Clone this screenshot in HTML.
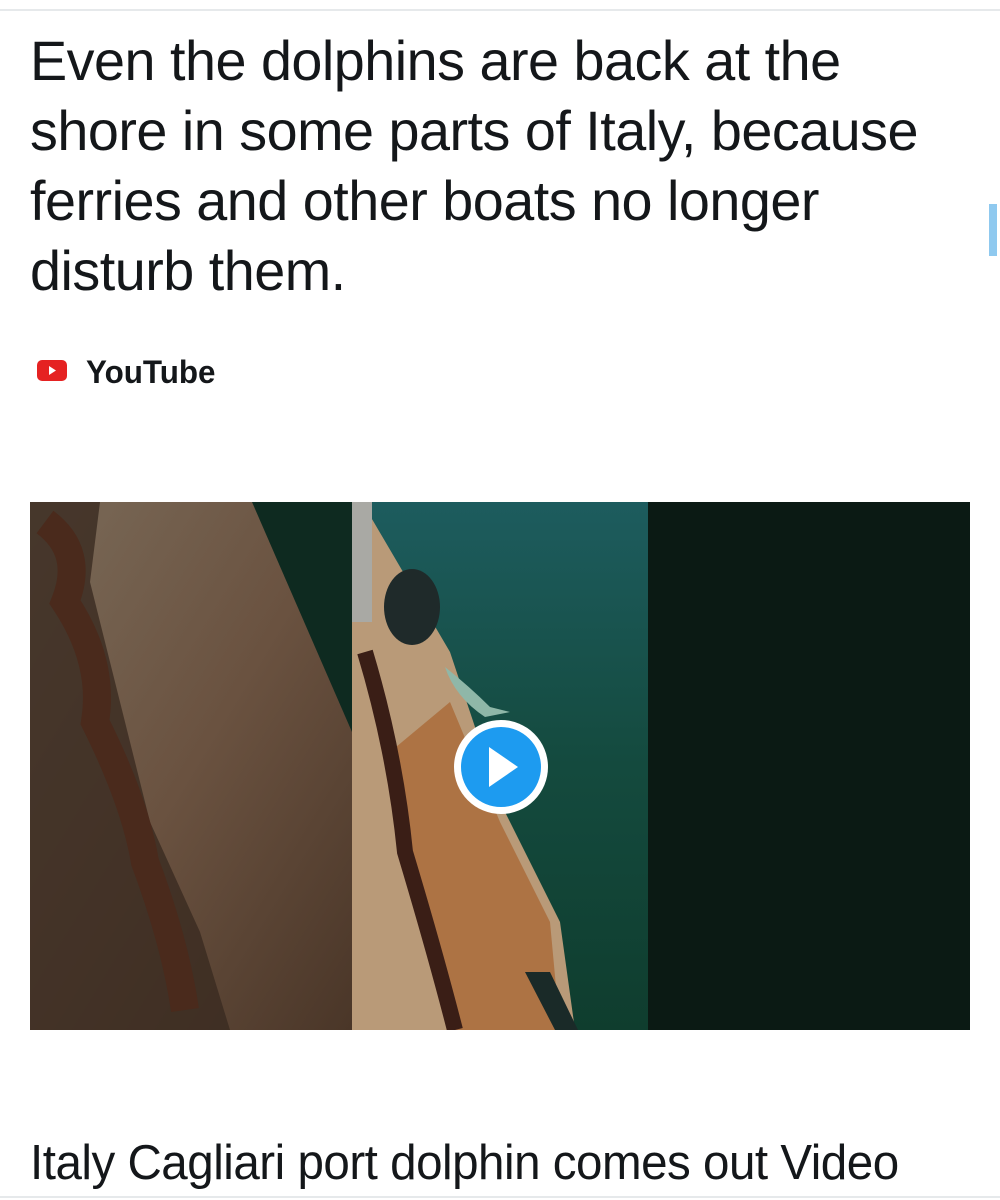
<!DOCTYPE html>
<html><head><meta charset="utf-8"><style>
html,body{margin:0;padding:0;background:#fff;width:1000px;height:1200px;overflow:hidden;position:relative;font-family:"Liberation Sans",sans-serif;color:#14171a}
.top{position:absolute;left:0;top:9px;width:1000px;height:2px;background:#e6e9eb}
.h{position:absolute;left:30px;top:26px;font-size:56px;line-height:70px;letter-spacing:-0.5px;width:1100px;white-space:nowrap}
.h div{transform:scaleX(0.995);transform-origin:left}
.bar{position:absolute;left:989px;top:204px;width:8px;height:52px;background:#8fc9ef}
.yt{position:absolute;left:86px;top:354px;font-size:32px;font-weight:bold;letter-spacing:0px;transform:scaleX(0.98);transform-origin:left}
.cap{position:absolute;left:30px;top:1135px;font-size:49px;letter-spacing:-0.5px;white-space:nowrap;transform:scaleX(0.97);transform-origin:left}
.bot{position:absolute;left:0;top:1196px;width:1000px;height:2px;background:#e6e9eb}
svg{position:absolute}
</style></head><body>
<div class="top"></div>
<div class="h"><div>Even the dolphins are back at the</div><div>shore in some parts of Italy, because</div><div>ferries and other boats no longer</div><div>disturb them.</div></div>
<div class="bar"></div>
<svg style="left:37px;top:360px" width="30" height="22"><rect x="0" y="0" width="30" height="21" rx="5" fill="#e52222"/><path d="M12 6 L19 10.5 L12 15Z" fill="#fff"/></svg>
<div class="yt">YouTube</div>
<svg style="left:30px;top:502px" width="940" height="528" viewBox="0 0 940 528">
<defs>
<linearGradient id="l" x1="0" y1="0" x2="1" y2="1"><stop offset="0" stop-color="#7a6a58"/><stop offset="0.5" stop-color="#6a5240"/><stop offset="1" stop-color="#4a3628"/></linearGradient>
<linearGradient id="w" x1="0" y1="0" x2="0" y2="1"><stop offset="0" stop-color="#1d5c5e"/><stop offset="0.5" stop-color="#144a3e"/><stop offset="1" stop-color="#0f3d2e"/></linearGradient>
</defs>
<rect width="940" height="528" fill="#0b1a14"/>
<rect width="322" height="528" fill="url(#l)"/>
<polygon points="222,0 322,0 322,230" fill="#0e2a20"/>
<path d="M0 0 L70 0 L60 80 L90 200 L120 320 L170 430 L200 528 L0 528Z" fill="#3a2a20" opacity="0.8"/>
<path d="M15 20 q40 30 20 80 q40 60 30 120 q40 80 50 140 q30 80 40 148" stroke="#4a2a1c" stroke-width="28" fill="none"/>
<rect x="322" width="296" height="528" fill="url(#w)"/>
<polygon points="322,0 332,0 420,150 470,300 530,420 545,528 322,528" fill="#b99a78"/>
<polygon points="360,250 420,200 470,320 520,420 530,528 420,528 390,400" fill="#a8622e" opacity="0.7"/>
<path d="M335 150 q30 100 40 200 q30 100 50 178" stroke="#3a1e16" stroke-width="16" fill="none"/>
<ellipse cx="382" cy="105" rx="28" ry="38" fill="#1f2a2a"/>
<rect x="322" y="0" width="20" height="120" fill="#a9a9a4"/>
<path d="M415 165 q25 20 45 40 l20 5 l-25 5 q-30 -20 -40 -50Z" fill="#8fb7a8"/>
<polygon points="495,470 520,470 548,528 525,528" fill="#1a2a28"/>
<circle cx="471" cy="265" r="47" fill="#fff"/>
<circle cx="471" cy="265" r="40" fill="#1d9bf0"/>
<path d="M459 245 L488 265 L459 285Z" fill="#fff"/>
</svg>
<div class="cap">Italy Cagliari port dolphin comes out Video</div>
<div class="bot"></div>
</body></html>
